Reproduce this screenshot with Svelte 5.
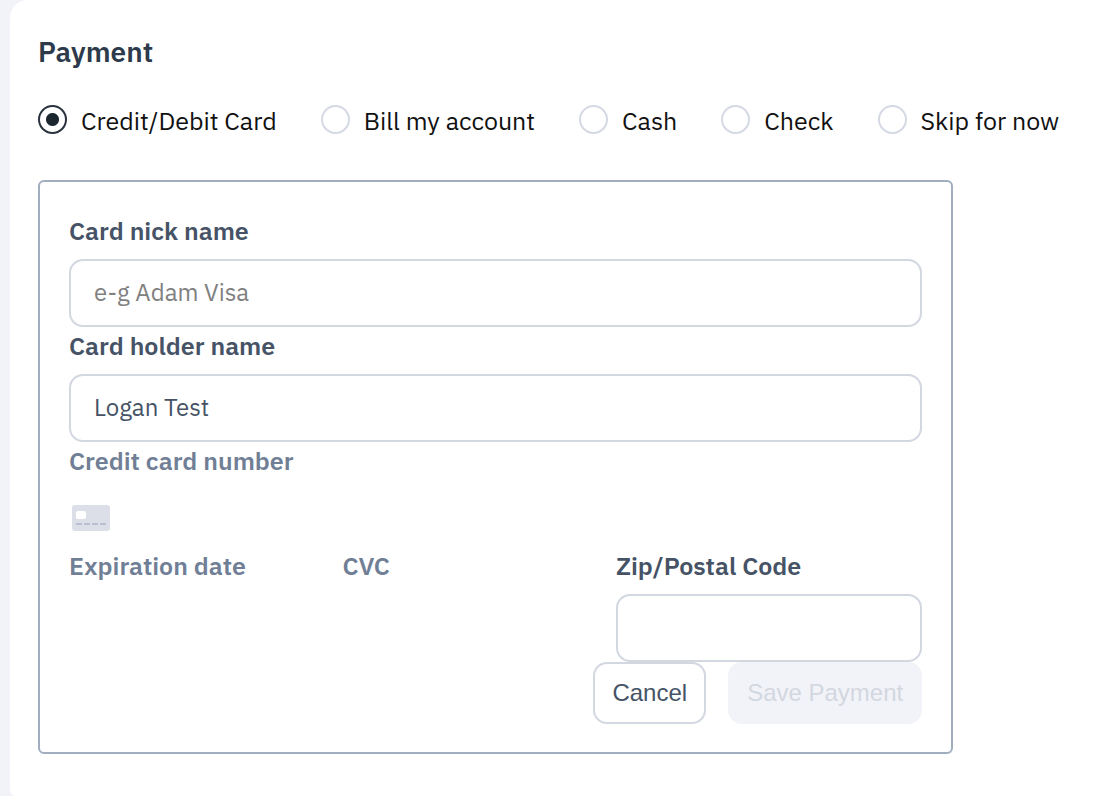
<script>
  const methods = [
    { id: 'card', label: 'Credit/Debit Card' },
    { id: 'bill', label: 'Bill my account' },
    { id: 'cash', label: 'Cash' },
    { id: 'check', label: 'Check' },
    { id: 'skip', label: 'Skip for now' }
  ];

  let method = $state('card');
  let nickname = $state('');
  let holder = $state('Logan Test');
  let zip = $state('');
</script>

<main>
  <h2>Payment</h2>

  <div class="methods" role="radiogroup" aria-label="Payment">
    {#each methods as m}
      <label class="method">
        <input type="radio" name="method" value={m.id} bind:group={method} />
        <span>{m.label}</span>
      </label>
    {/each}
  </div>

  <form class="card" onsubmit={(e) => e.preventDefault()}>
    <div class="field">
      <label for="nickname">Card nick name</label>
      <input id="nickname" class="box" type="text" placeholder="e-g Adam Visa" bind:value={nickname} />
    </div>
    <div class="field">
      <label for="holder">Card holder name</label>
      <input id="holder" class="box" type="text" bind:value={holder} />
    </div>
    <div class="field muted">
      <label for="number">Credit card number</label>
      <div class="number">
        <svg width="38" height="26" viewBox="0 0 38 26" aria-hidden="true">
          <rect width="38" height="26" rx="3" fill="#dcdfe8" />
          <rect x="4" y="6" width="10" height="8" rx="2" fill="#ffffff" />
          <path d="M4 19h6M12 19h6M20 19h6M28 19h6" stroke="#b9bfd0" stroke-width="2" />
        </svg>
        <input id="number" class="bare" type="text" inputmode="numeric" />
      </div>
    </div>
    <div class="row">
      <div class="field muted">
        <label for="expiry">Expiration date</label>
        <input id="expiry" class="bare" type="text" />
      </div>
      <div class="field muted">
        <label for="cvc">CVC</label>
        <input id="cvc" class="bare" type="text" />
      </div>
      <div class="field">
        <label for="zip">Zip/Postal Code</label>
        <input id="zip" class="box" type="text" bind:value={zip} />
      </div>
    </div>
    <div class="actions">
      <button type="button" class="cancel">Cancel</button>
      <button type="submit" class="save" disabled>Save Payment</button>
    </div>
  </form>
</main>

<style>
  :global(body) {
    margin: 0;
    background: #f2f3f8;
  }

  main {
    box-sizing: border-box;
    min-height: 100vh;
    margin-left: 10px;
    padding: 32px 28px 42px;
    border-radius: 18px 0 0 6px;
    background: #fff;
    font-family: 'IBM Plex Sans', Roboto, sans-serif;
    font-size: 25px;
    color: #111;
  }

  h2 {
    margin: 0;
    font-size: 28px;
    font-weight: 600;
    line-height: 40px;
    color: #2d3a4b;
  }

  .methods {
    display: flex;
    flex-wrap: wrap;
    column-gap: 44px;
    margin-top: 25px;
  }

  .method {
    display: flex;
    align-items: center;
    gap: 14px;
    line-height: 40px;
    white-space: nowrap;
  }

  .method span {
    padding-top: 4px;
  }

  .method input {
    appearance: none;
    box-sizing: border-box;
    width: 29px;
    height: 29px;
    margin: 0;
    border: 2px solid #d5d9e3;
    border-radius: 50%;
  }

  .method input:checked {
    border-color: #2a333d;
    background: radial-gradient(circle, #1c262f 6px, transparent 7px);
  }

  .card {
    box-sizing: border-box;
    width: 87%;
    margin-top: 39px;
    padding: 30px 29px 28px;
    border: 2px solid #a0aec0;
    border-radius: 6px;
  }

  .field label {
    display: block;
    margin-bottom: 9px;
    font-weight: 600;
    line-height: 38px;
    color: #465366;
  }

  .muted label {
    color: #717f96;
  }

  .field input {
    box-sizing: border-box;
    width: 100%;
    min-width: 0;
    font: inherit;
    font-size: 24px;
    color: #465366;
    background: transparent;
  }

  .box {
    display: block;
    height: 68px;
    padding: 0 23px 2px;
    border: 2px solid #d2d7e0;
    border-radius: 14px;
  }

  .box::placeholder {
    color: #808080;
    opacity: 1;
  }

  .field .bare {
    height: 58px;
    padding: 0;
    border: 0;
    outline: 0;
  }

  .number {
    display: flex;
    align-items: center;
    gap: 16px;
    padding-left: 3px;
  }

  .number svg {
    flex: none;
  }

  .row {
    display: grid;
    grid-template-columns: 25fr 25fr 28fr;
  }

  .actions {
    display: flex;
    justify-content: flex-end;
    gap: 22px;
  }

  button {
    height: 62px;
    padding: 0 17px;
    border: 2px solid #d2d7e0;
    border-radius: 14px;
    background: #fff;
    font-family: 'Liberation Sans', Arial, sans-serif;
    font-size: 24px;
    color: #465366;
  }

  .save {
    border-color: #f2f3f8;
    background: #f2f3f8;
    color: #d2d7e0;
  }
</style>
